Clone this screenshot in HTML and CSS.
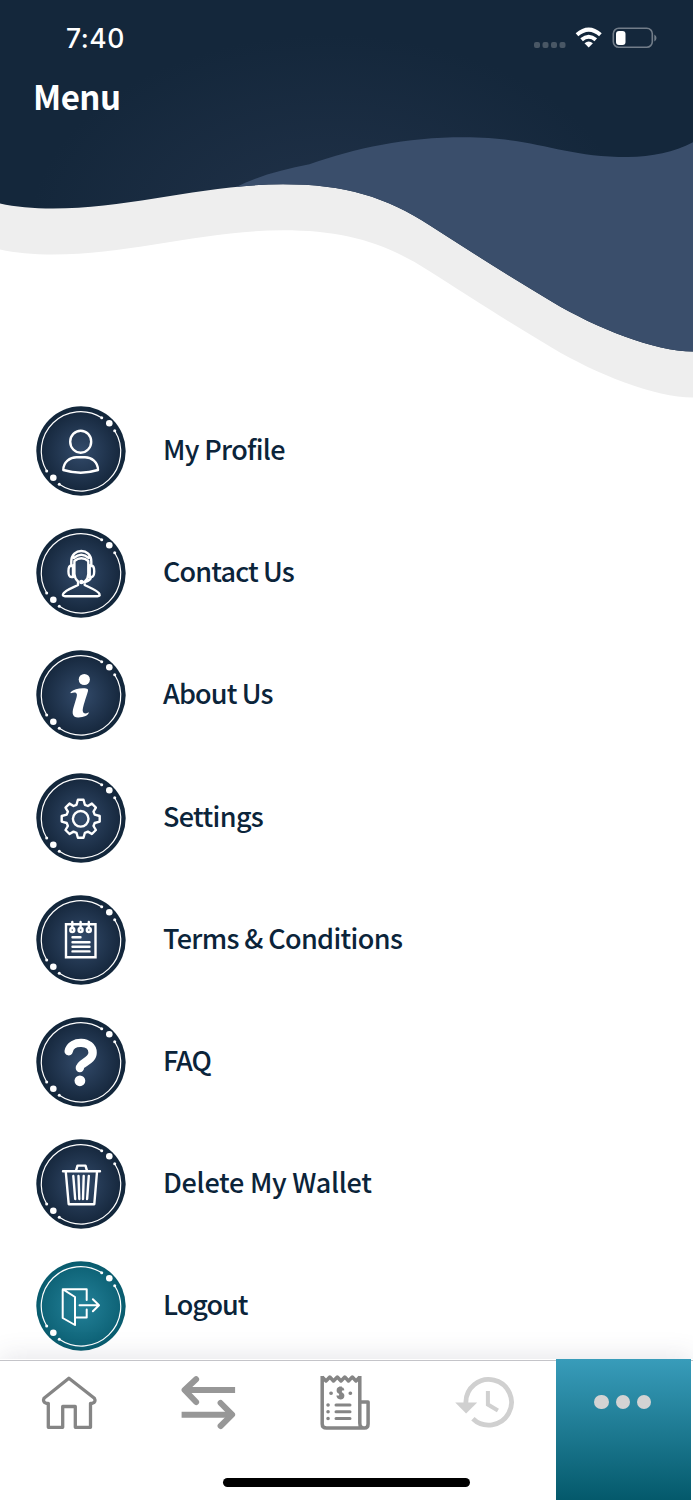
FILE: index.html
```html
<!DOCTYPE html>
<html lang="en">
<head>
<meta charset="utf-8">
<title>Menu</title>
<link rel="stylesheet" href="styles.css">
</head>
<body>
<svg class="defs" width="0" height="0" aria-hidden="true">
  <defs>
    <radialGradient id="navy"><stop offset="0" stop-color="#334b6b"/><stop offset=".86" stop-color="#17293f"/><stop offset="1" stop-color="#11263a"/></radialGradient>
    <radialGradient id="teal"><stop offset="0" stop-color="#24829a"/><stop offset=".86" stop-color="#0f6478"/><stop offset="1" stop-color="#075a6c"/></radialGradient>
    <g id="orbit">
      <path d="M78.7 24.7A39.4 39.4 0 0 1 23.3 78.3M10.7 65A39.4 39.4 0 0 1 65.7 11.7" fill="none" stroke="#fff" stroke-width="1.2"/>
      <g fill="#fff"><circle cx="73.3" cy="17.3" r="3.3"/><circle cx="17.3" cy="71.7" r="3.3"/><circle cx="65.7" cy="11.7" r="1.5"/><circle cx="78.7" cy="24.7" r="1.5"/><circle cx="10.7" cy="65" r="1.5"/><circle cx="23.3" cy="78.3" r="1.5"/></g>
    </g>
    <g id="badge"><circle cx="45" cy="45" r="44.7" fill="url(#navy)"/><use href="#orbit"/></g>
    <g id="badge-teal"><circle cx="45" cy="45" r="44.7" fill="url(#teal)"/><use href="#orbit"/></g>
  </defs>
</svg>
<div class="screen">
  <header class="header">
    <svg class="waves" viewBox="0 0 693 400" aria-hidden="true">
      <defs>
        <radialGradient id="sky" gradientUnits="userSpaceOnUse" cx="330" cy="230" r="300" gradientTransform="translate(0 80) scale(1 .65)"><stop offset="0" stop-color="#213249"/><stop offset="1" stop-color="#14273b"/></radialGradient>
        <path id="wave" d="M0 0H693V351.5C655 351.5 596 328 552 301.7C507 275 465 248 430 225.5C386 197 345 184.3 283 184.3C205 184.3 130 208.5 53 208.5C33 208.5 15 207 0 203.5Z"/>
        <clipPath id="front"><use href="#wave"/></clipPath>
      </defs>
      <use href="#wave" y="46" fill="#eee"/>
      <use href="#wave" fill="url(#sky)"/>
      <path clip-path="url(#front)" fill="#3a4e6b" d="M236 187C258 176 283 169.5 309.400 164.300C356 148 405 137.300 464 137.300C538 137.300 560 157 628 157C652 157 674 152 693 142.300V400H236Z"/>
    </svg>
    <div class="status">
      <span class="time">7:40</span>
      <svg class="signals" width="124" height="26" viewBox="533 25 124 26" aria-hidden="true">
        <g fill="#495765"><rect x="534" y="42" width="6" height="6" rx="2"/><rect x="542.5" y="42" width="6" height="6" rx="2"/><rect x="551" y="42" width="6" height="6" rx="2"/><rect x="559.500" y="42" width="6" height="6" rx="2"/></g>
        <g fill="none" stroke="#fff" stroke-width="4"><path d="M577 34.800Q588.700 24.500 600.400 34.800"/><path d="M581.600 39.800Q588.700 33.700 595.800 39.800"/></g>
        <path fill="#fff" d="M584.500 43.200Q588.700 40 592.900 43.200L588.700 47.600Z"/>
        <rect x="613.300" y="28.300" width="39" height="19" rx="5.500" fill="none" stroke="#727d89" stroke-width="1.600"/>
        <rect x="616" y="31" width="9.500" height="14" rx="3" fill="#fff"/>
        <path fill="#727d89" d="M654.300 34.500Q656.500 35.600 656.500 38T654.300 41.500Z"/>
      </svg>
    </div>
    <h1 class="title">Menu</h1>
  </header>
  <main class="menu">
    <a class="row"><svg class="icon" viewBox="0 0 90 90"><use href="#badge"/><g class="line"><ellipse cx="44.700" cy="35.700" rx="10.500" ry="11"/><path d="M27.300 64C27.300 56 34 51.200 40.500 51.200H49C55.500 51.200 62 56 62 64Q53 66.700 44.700 66.700T27.300 64Z"/></g></svg><span class="label profile">My Profile</span></a>
    <a class="row"><svg class="icon" viewBox="0 0 90 90"><use href="#badge"/><g class="line"><path d="M35.300 38V33.500C35.300 19.500 55.300 19.500 55.300 33.500V38M38.400 37V33Q45.300 27.500 52.300 33V37M37.800 30Q45.300 23.500 52.800 30M38.400 34V46Q38.700 50.500 42 53.500V57C38.500 59 28 62.500 27 66.300Q26.500 68.200 29 68.200H61.600Q64.200 68.200 63.600 66.300C62.500 62.500 52 59 48.700 57V53.700Q52.300 50.500 52.300 46V34M35.300 37.500C31.500 37.500 31.500 49 35.300 49H37V37.500ZM55.300 37.500C59.200 37.500 59.200 49 55.300 49H53.700V37.500ZM55.300 49Q53.500 54 46.500 54"/><circle cx="45.300" cy="54" r="1" fill="#fff"/></g></svg><span class="label contact">Contact Us</span></a>
    <a class="row"><svg class="icon" viewBox="0 0 90 90"><use href="#badge"/><g fill="#fff"><circle cx="48.300" cy="29.500" r="5.600"/><path d="M34.500 42.300C38 39 45 37.700 51 38.700Q52.500 39 52 41C50 48 46.500 57 46.700 61Q47.200 65.200 52.800 62.300C53 65.200 47 67.700 42 67.500C36.500 67.200 35.800 63.300 37.500 57.500L40.500 47.500C42 42.500 39.500 41.800 34.800 43.300Z"/></g></svg><span class="label about">About Us</span></a>
    <a class="row"><svg class="icon" viewBox="0 0 90 90"><use href="#badge"/><g class="line" transform="translate(44.700 45.800)"><circle r="7.800"/><path d="M-2.800-19H2.800L4.200-14L7.200-12.800L11.200-15.200L15.200-11.200L12.800-7.200L14-4.200L19-2.800V2.800L14 4.200L12.800 7.200L15.200 11.200L11.200 15.200L7.200 12.800L4.200 14L2.800 19H-2.800L-4.200 14L-7.200 12.800L-11.200 15.200L-15.200 11.200L-12.800 7.200L-14 4.200L-19 2.800V-2.800L-14-4.200L-12.800-7.200L-15.200-11.200L-11.200-15.200L-7.200-12.800L-4.200-14Z"/></g></svg><span class="label settings">Settings</span></a>
    <a class="row"><svg class="icon" viewBox="0 0 90 90"><use href="#badge"/><g class="line"><path class="miter" d="M30 29.200H59.500V62.300H30Z"/><circle cx="36.300" cy="35" r="2"/><circle cx="44.600" cy="35" r="2"/><circle cx="52.800" cy="35" r="2"/><path d="M36.300 27V33M44.600 27V33M52.800 27V33M36.500 42.300H44.500M36.500 47.300H53.500M36.500 51.800H53.500M36.500 56.400H53.500"/></g></svg><span class="label terms">Terms &amp; Conditions</span></a>
    <a class="row"><svg class="icon" viewBox="0 0 90 90"><use href="#badge"/><path d="M32.700 34.200C35 22.500 56.600 23.300 56.600 35.700C56.600 44.300 44 45.500 43.900 51" fill="none" stroke="#fff" stroke-width="8.400" stroke-linecap="round"/><circle cx="43.900" cy="63.800" r="5.400" fill="#fff"/></svg><span class="label faq">FAQ</span></a>
    <a class="row"><svg class="icon" viewBox="0 0 90 90"><use href="#badge"/><g class="line"><path d="M27 32.300H64M40 31.800L41.500 26.600H49.500L51 31.800M29.800 33L32.700 65.200H58.300L61 33M37.300 37L39.200 60M42.500 37L43.300 60M47.700 37L47 60M52.800 37L51.100 60"/></g></svg><span class="label delete">Delete My Wallet</span></a>
    <a class="row"><svg class="icon" viewBox="0 0 90 90"><use href="#badge-teal"/><g class="line thin"><path d="M50.700 39V28.200H26.700V57L39 64V36L26.700 28.200M39 56.500H50.700V48.500M43.500 44.300H62.500M56.900 38.300L63 44.300L56.900 50.300"/></g></svg><span class="label logout">Logout</span></a>
  </main>
  <nav class="tabs">
    <a class="tab"><svg width="64" height="60" viewBox="37.300 1373 64 60" fill="none" stroke="#858585" stroke-width="3.300" stroke-linejoin="round"><path d="M69.200 1378.300L44.300 1398.300Q42.700 1401.800 46.500 1403.300H48.600V1427.300H63V1406.500H75.600V1427.300H90.800V1403.300H92.700Q96.600 1401.800 94.700 1398.300Z"/></svg></a>
    <a class="tab"><svg width="64" height="60" viewBox="175.900 1373 64 60" fill="none" stroke="#979797" stroke-width="6" stroke-linejoin="round"><path d="M235 1390H184.500M181.500 1414.700H232"/><path stroke-linecap="round" d="M196 1379.200L184.500 1390L196 1402M220.500 1403L232 1414.700L220.500 1426"/></svg></a>
    <a class="tab"><svg width="64" height="60" viewBox="314.500 1373 64 60" fill="none" stroke="#858585" stroke-width="3.500" stroke-linejoin="round"><path d="M322.700 1376V1424Q322.700 1428 327 1428H365Q368.600 1428 368.600 1424V1402H360.300M360.300 1376V1423Q360.300 1428 364.500 1428M322.700 1377L326.500 1381L330.300 1377L334 1381L337.800 1377L341.500 1381L345.300 1377L349 1381L352.800 1377L356.500 1381L360.300 1377"/><path d="M336.500 1405H350.500M336.500 1411.800H350.500M336.500 1418.600H350.500" stroke-linecap="round" stroke-width="3"/><path d="M328.500 1405H328.600M328.500 1411.800H328.600M328.500 1418.600H328.600M331.400 1393.200H331.700M350.700 1393.200H351" stroke-linecap="round"/><path d="M343.500 1390.500C343 1387.500 338.500 1387.500 338.500 1390.500S343.500 1392.500 343.500 1395.800S338.500 1398.500 338.300 1395.500M341 1386.500V1399" stroke-width="2.800"/></svg></a>
    <a class="tab"><svg width="64" height="60" viewBox="453.100 1373 64 60" fill="none" stroke="#d0d0d0" stroke-width="4.800"><path d="M466 1403A22.800 22.800 0 1 1 473 1418.700"/><path stroke-width="4" d="M488 1391V1404.500L498 1410.500"/><path fill="#d0d0d0" stroke="none" d="M455.300 1402.500H477.300L466.200 1413.500Z"/></svg></a>
    <a class="tab active"><i class="dot"></i><i class="dot"></i><i class="dot"></i></a>
    <div class="home-bar"></div>
  </nav>
</div>
</body>
</html>
```

FILE: styles.css
```css
* { box-sizing: border-box; }
body { margin: 0; background: #fff; font-family: "Noto Sans CJK SC", "Noto Sans", sans-serif; }
.defs { position: absolute; }
.screen { width: 693px; height: 1500px; overflow: hidden; display: flex; flex-direction: column; position: relative; }
.header { position: relative; height: 406px; flex: none; color: #fff; padding: 18px 36px 0 34px; }
.waves { position: absolute; left: 0; top: 0; width: 693px; height: 400px; }
.status { position: relative; display: flex; justify-content: space-between; align-items: center; height: 40px; padding-left: 32px; }
.time { font: 500 26.5px/41px Inter, sans-serif; letter-spacing: 0.5px; }
.title { position: relative; margin: 13px 0 0 -1px; font-size: 33px; line-height: 50px; font-weight: 700; letter-spacing: -0.5px; }
.menu { display: flex; flex-direction: column; gap: 32.2px; padding-left: 36px; }
.row { display: flex; align-items: center; gap: 37px; height: 90px; flex: none; }
.icon { width: 90px; height: 90px; flex: none; }
.line { fill: none; stroke: #fff; stroke-width: 2.4; stroke-linecap: round; stroke-linejoin: round; }
.line.thin { stroke-width: 2; }
.line .miter { stroke-linejoin: miter; }
.label { font-size: 27px; line-height: 40px; padding-bottom: 4px; font-weight: 500; color: #0b243a; white-space: nowrap; letter-spacing: -0.65px; }
.contact, .about { letter-spacing: -0.85px; }
.faq, .logout { letter-spacing: -1px; }
.delete { letter-spacing: -0.27px; }
.tabs { position: absolute; left: 0; bottom: 0; width: 693px; height: 141px; padding-right: 2px; display: grid; grid-template-columns: repeat(4, 138.6px) 1fr; background: linear-gradient(#c4c4c9, #c4c4c9) 0 1px / 100% 1px no-repeat, #fff; box-shadow: 0 -3px 24px rgba(60, 60, 90, .13); }
.tab { display: flex; justify-content: center; padding-top: 14px; }
.tab.active { margin-left: 1.2px; gap: 7px; padding: 36px 1px 0 0; background: linear-gradient(#389cba, #04596b); }
.dot { width: 14.4px; height: 14.4px; border-radius: 50%; background: #d3d3d3; }
.home-bar { position: absolute; left: 223px; bottom: 13.5px; width: 247px; height: 8.5px; border-radius: 5px; background: #000; }
```
